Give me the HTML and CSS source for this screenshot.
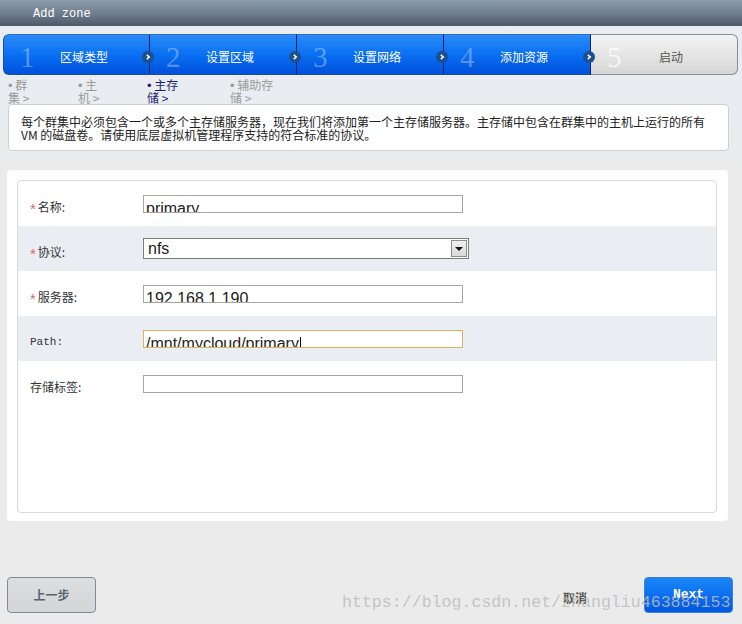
FILE: index.html
```html
<!DOCTYPE html>
<html>
<head>
<meta charset="utf-8">
<link rel="stylesheet" href="styles.css">
</head>
<body>
<div class="header">Add zone</div>

<div class="steps">
  <div class="step blue first"><span class="num">1</span><span class="lbl">区域类型</span>
    <svg class="arrow" width="12" height="12" viewBox="0 0 12 12"><circle cx="6" cy="6" r="6" fill="#1d4f8c"/><path d="M4.8 3.8 L7.2 6 L4.8 8.2" fill="none" stroke="#fff" stroke-width="1.6"/></svg></div>
  <div class="step blue"><span class="num">2</span><span class="lbl">设置区域</span>
    <svg class="arrow" width="12" height="12" viewBox="0 0 12 12"><circle cx="6" cy="6" r="6" fill="#1d4f8c"/><path d="M4.8 3.8 L7.2 6 L4.8 8.2" fill="none" stroke="#fff" stroke-width="1.6"/></svg></div>
  <div class="step blue"><span class="num">3</span><span class="lbl">设置网络</span>
    <svg class="arrow" width="12" height="12" viewBox="0 0 12 12"><circle cx="6" cy="6" r="6" fill="#1d4f8c"/><path d="M4.8 3.8 L7.2 6 L4.8 8.2" fill="none" stroke="#fff" stroke-width="1.6"/></svg></div>
  <div class="step blue"><span class="num">4</span><span class="lbl">添加资源</span>
    <svg class="arrow" width="12" height="12" viewBox="0 0 12 12"><circle cx="6" cy="6" r="6" fill="#1d4f8c"/><path d="M4.8 3.8 L7.2 6 L4.8 8.2" fill="none" stroke="#fff" stroke-width="1.6"/></svg></div>
  <div class="step grey last"><span class="num">5</span><span class="lbl">启动</span></div>
</div>

<div class="substeps">
  <div class="sub w1"><span class="dot">•</span> 群<br>集 &gt;</div>
  <div class="sub w2"><span class="dot">•</span> 主<br>机 &gt;</div>
  <div class="sub w3 active"><span class="dot">•</span> 主存<br>储 &gt;</div>
  <div class="sub w4"><span class="dot">•</span> 辅助存<br>储 &gt;</div>
</div>

<div class="info">每个群集中必须包含一个或多个主存储服务器，现在我们将添加第一个主存储服务器。主存储中包含在群集中的主机上运行的所有<br>VM 的磁盘卷。请使用底层虚拟机管理程序支持的符合标准的协议。</div>

<div class="panel">
  <div class="inner">
    <div class="row">
      <div class="label"><span class="star">*</span>名称:</div>
      <div class="field">primary</div>
    </div>
    <div class="row alt">
      <div class="label"><span class="star">*</span>协议:</div>
      <div class="select"><span class="seltext">nfs</span><span class="selbtn"><span class="tri"></span></span></div>
    </div>
    <div class="row">
      <div class="label"><span class="star">*</span>服务器:</div>
      <div class="field">192.168.1.190</div>
    </div>
    <div class="row alt">
      <div class="label mono">Path:</div>
      <div class="field focus">/mnt/mycloud/primary<span class="caret"></span></div>
    </div>
    <div class="row">
      <div class="label">存储标签:</div>
      <div class="field"></div>
    </div>
  </div>
</div>

<div class="footer">
  <div class="btn prev">上一步</div>
  <div class="spacer"></div>
  <div class="cancel">取消</div>
  <div class="btn next">Next</div>
  <div class="watermark">https://blog.csdn.net/zhangliu463884153</div>
</div>
</body>
</html>
```
FILE: styles.css
```css
html, body {
  margin: 0;
  padding: 0;
}
body {
  width: 742px;
  height: 624px;
  overflow: hidden;
  background: linear-gradient(#e9edf1 0, #e9edf1 120px, #ebebeb 170px, #ebebeb 100%);
  font-family: "Noto Sans CJK SC", "Liberation Sans", sans-serif;
  font-size: 12px;
  color: #333;
}
.header {
  height: 26px;
  box-sizing: border-box;
  padding-left: 33px;
  line-height: 29px;
  background: linear-gradient(#8e9dae, #6d7b8a 55%, #4d5967);
  color: #ffffff;
  font-family: "Liberation Mono", monospace;
  font-size: 12px;
}
.steps {
  display: flex;
  margin: 8px 0 0 3px;
  width: 735px;
  height: 41px;
}
.step {
  position: relative;
  width: 147px;
  box-sizing: border-box;
  display: flex;
  align-items: center;
  padding-top: 4px;
}
.step.blue {
  background: linear-gradient(#2b8cf8, #0a70f2 50%, #0050dc);
  border-top: 1px solid #2a6fc8;
  border-bottom: 1px solid #1c4c9a;
  border-right: 1px solid #16245a;
}
.step.first {
  border-left: 1px solid #1c4c9a;
  border-radius: 6px 0 0 6px;
}
.step.grey {
  background: linear-gradient(#f3f3f3, #e2e2e2 60%, #d6d6d6);
  border: 1px solid #8a8f96;
  border-left: none;
  border-radius: 0 6px 6px 0;
}
.num {
  width: 40px;
  box-sizing: border-box;
  padding-left: 16px;
  font-family: "Liberation Serif", serif;
  font-size: 29px;
  line-height: 28px;
  color: rgba(255, 255, 255, 0.32);
}
.grey .num {
  color: rgba(255, 255, 255, 0.75);
}
.lbl {
  width: 80px;
  text-align: center;
  color: #fff;
  font-size: 12px;
}
.grey .lbl {
  color: #555;
}
.arrow {
  position: absolute;
  right: -5px;
  top: 16px;
  z-index: 2;
}
.substeps {
  display: flex;
  height: 25px;
  margin: 4px 0 0 8px;
  font-size: 12px;
  line-height: 12px;
  color: #9a9a9a;
}
.dot {
  font-family: "Liberation Sans", sans-serif;
  font-size: 13px;
}
.sub.w1 { width: 70px; }
.sub.w2 { width: 69px; }
.sub.w3 { width: 83px; }
.sub.w4 { width: 80px; }
.sub.active {
  color: #1c1c78;
}
.info {
  margin-left: 8px;
  width: 721px;
  height: 47px;
  box-sizing: border-box;
  padding: 10px 0 0 12px;
  background: #fff;
  border: 1px solid #cfcfcf;
  border-radius: 4px;
  font-size: 12px;
  line-height: 13px;
  color: #222;
  white-space: nowrap;
}
.panel {
  margin: 19px 0 0 7px;
  width: 721px;
  height: 351px;
  box-sizing: border-box;
  padding: 10px 11px 8px 10px;
  background: #fff;
  border-radius: 4px;
}
.inner {
  height: 333px;
  box-sizing: border-box;
  border: 1px solid #d9d9d9;
  border-radius: 4px;
  overflow: hidden;
}
.row {
  height: 45px;
  display: flex;
  align-items: center;
}
.row.alt {
  background: #eaedf2;
}
.label {
  width: 125px;
  box-sizing: border-box;
  padding: 6px 0 0 12px;
  color: #333;
  font-size: 12px;
}
.label.mono {
  font-family: "Liberation Mono", monospace;
  font-size: 11px;
}
.star {
  color: #d46a6a;
  font-family: "Liberation Sans", sans-serif;
  font-size: 15px;
  margin-right: 2px;
  position: relative;
  top: 2px;
}
.field {
  width: 320px;
  height: 18px;
  box-sizing: border-box;
  border: 1px solid #a6a6a6;
  background: #fff;
  overflow: hidden;
  padding: 5px 0 0 2px;
  font-family: "Liberation Sans", sans-serif;
  font-size: 16px;
  line-height: 16px;
  color: #222;
  white-space: nowrap;
}
.field.focus {
  border-color: #dfb15a;
}
.caret {
  display: inline-block;
  width: 1px;
  height: 16px;
  background: #000;
  vertical-align: -4px;
  margin-left: 1px;
}
.select {
  width: 326px;
  height: 21px;
  box-sizing: border-box;
  border: 1px solid #7c7c7c;
  background: #fff;
  display: flex;
  align-items: center;
  justify-content: space-between;
}
.seltext {
  padding-left: 4px;
  font-family: "Liberation Sans", sans-serif;
  font-size: 16px;
  color: #222;
}
.selbtn {
  width: 16px;
  height: 17px;
  box-sizing: border-box;
  margin-right: 1px;
  border: 1px solid #8c8c8c;
  background: linear-gradient(#f0f0f0, #d9d9d9);
  display: flex;
  align-items: center;
  justify-content: center;
}
.tri {
  width: 0;
  height: 0;
  border-left: 4px solid transparent;
  border-right: 4px solid transparent;
  border-top: 4px solid #111;
}
.footer {
  position: relative;
  display: flex;
  align-items: center;
  margin: 56px 0 0 7px;
  width: 726px;
  height: 36px;
}
.btn {
  width: 89px;
  height: 36px;
  box-sizing: border-box;
  border-radius: 4px;
  display: flex;
  align-items: center;
  justify-content: center;
}
.btn.prev {
  background: linear-gradient(#dcdee0, #d3d5d8);
  border: 1px solid #808a95;
  color: #5a6470;
  font-weight: bold;
  font-size: 12px;
  padding-bottom: 1px;
}
.spacer {
  flex: 1;
}
.cancel {
  color: #555;
  font-weight: bold;
  font-size: 12px;
  margin: 4px 57px 0 0;
}
.btn.next {
  background: linear-gradient(#1a86f5, #0a6cef 55%, #0058e0);
  border: 1px solid #3c7fd6;
  color: #fff;
  font-family: "Liberation Mono", monospace;
  font-weight: bold;
  font-size: 13px;
  padding-bottom: 2px;
}
.watermark {
  position: absolute;
  left: 335px;
  top: 16px;
  font-family: "Liberation Mono", monospace;
  font-size: 16.6px;
  line-height: 20px;
  color: rgba(188, 188, 188, 0.85);
  white-space: nowrap;
  pointer-events: none;
}
```
